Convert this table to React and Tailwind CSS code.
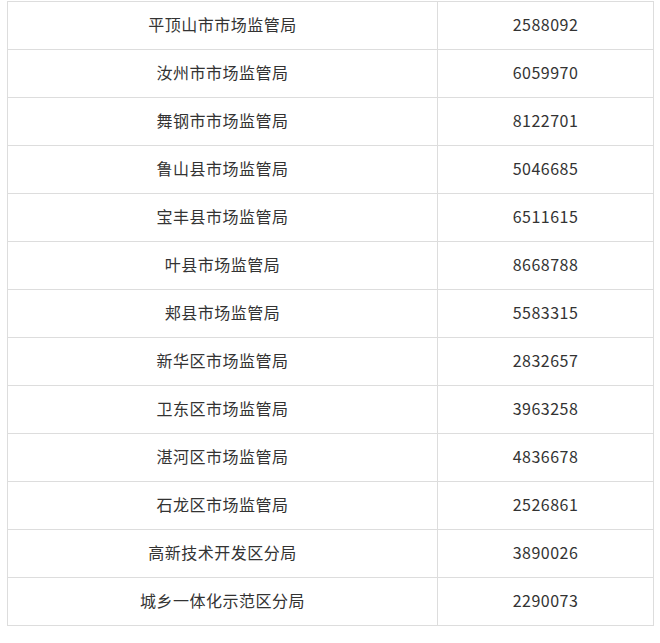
import React from 'react';

const rows = [
  ['平顶山市市场监管局', '2588092'],
  ['汝州市市场监管局', '6059970'],
  ['舞钢市市场监管局', '8122701'],
  ['鲁山县市场监管局', '5046685'],
  ['宝丰县市场监管局', '6511615'],
  ['叶县市场监管局', '8668788'],
  ['郏县市场监管局', '5583315'],
  ['新华区市场监管局', '2832657'],
  ['卫东区市场监管局', '3963258'],
  ['湛河区市场监管局', '4836678'],
  ['石龙区市场监管局', '2526861'],
  ['高新技术开发区分局', '3890026'],
  ['城乡一体化示范区分局', '2290073'],
];

export default function App() {
  return (
    <div className="bg-white min-h-screen pt-px pl-[7px] font-['Noto_Sans_CJK_SC','Noto_Sans',sans-serif] text-[#333] text-[16px] tracking-[0.5px]">
      <table className="border-collapse w-[646px] table-fixed">
        <colgroup>
          <col className="w-[430px]" />
          <col className="w-[216px]" />
        </colgroup>
        <tbody>
          {rows.map(([name, num]) => (
            <tr key={name} className="h-[48px]">
              <td className="border border-[#dddddd] text-center p-0 pb-[4px]">{name}</td>
              <td className="border border-[#dddddd] text-center p-0 pb-[4px]">{num}</td>
            </tr>
          ))}
        </tbody>
      </table>
    </div>
  );
}
